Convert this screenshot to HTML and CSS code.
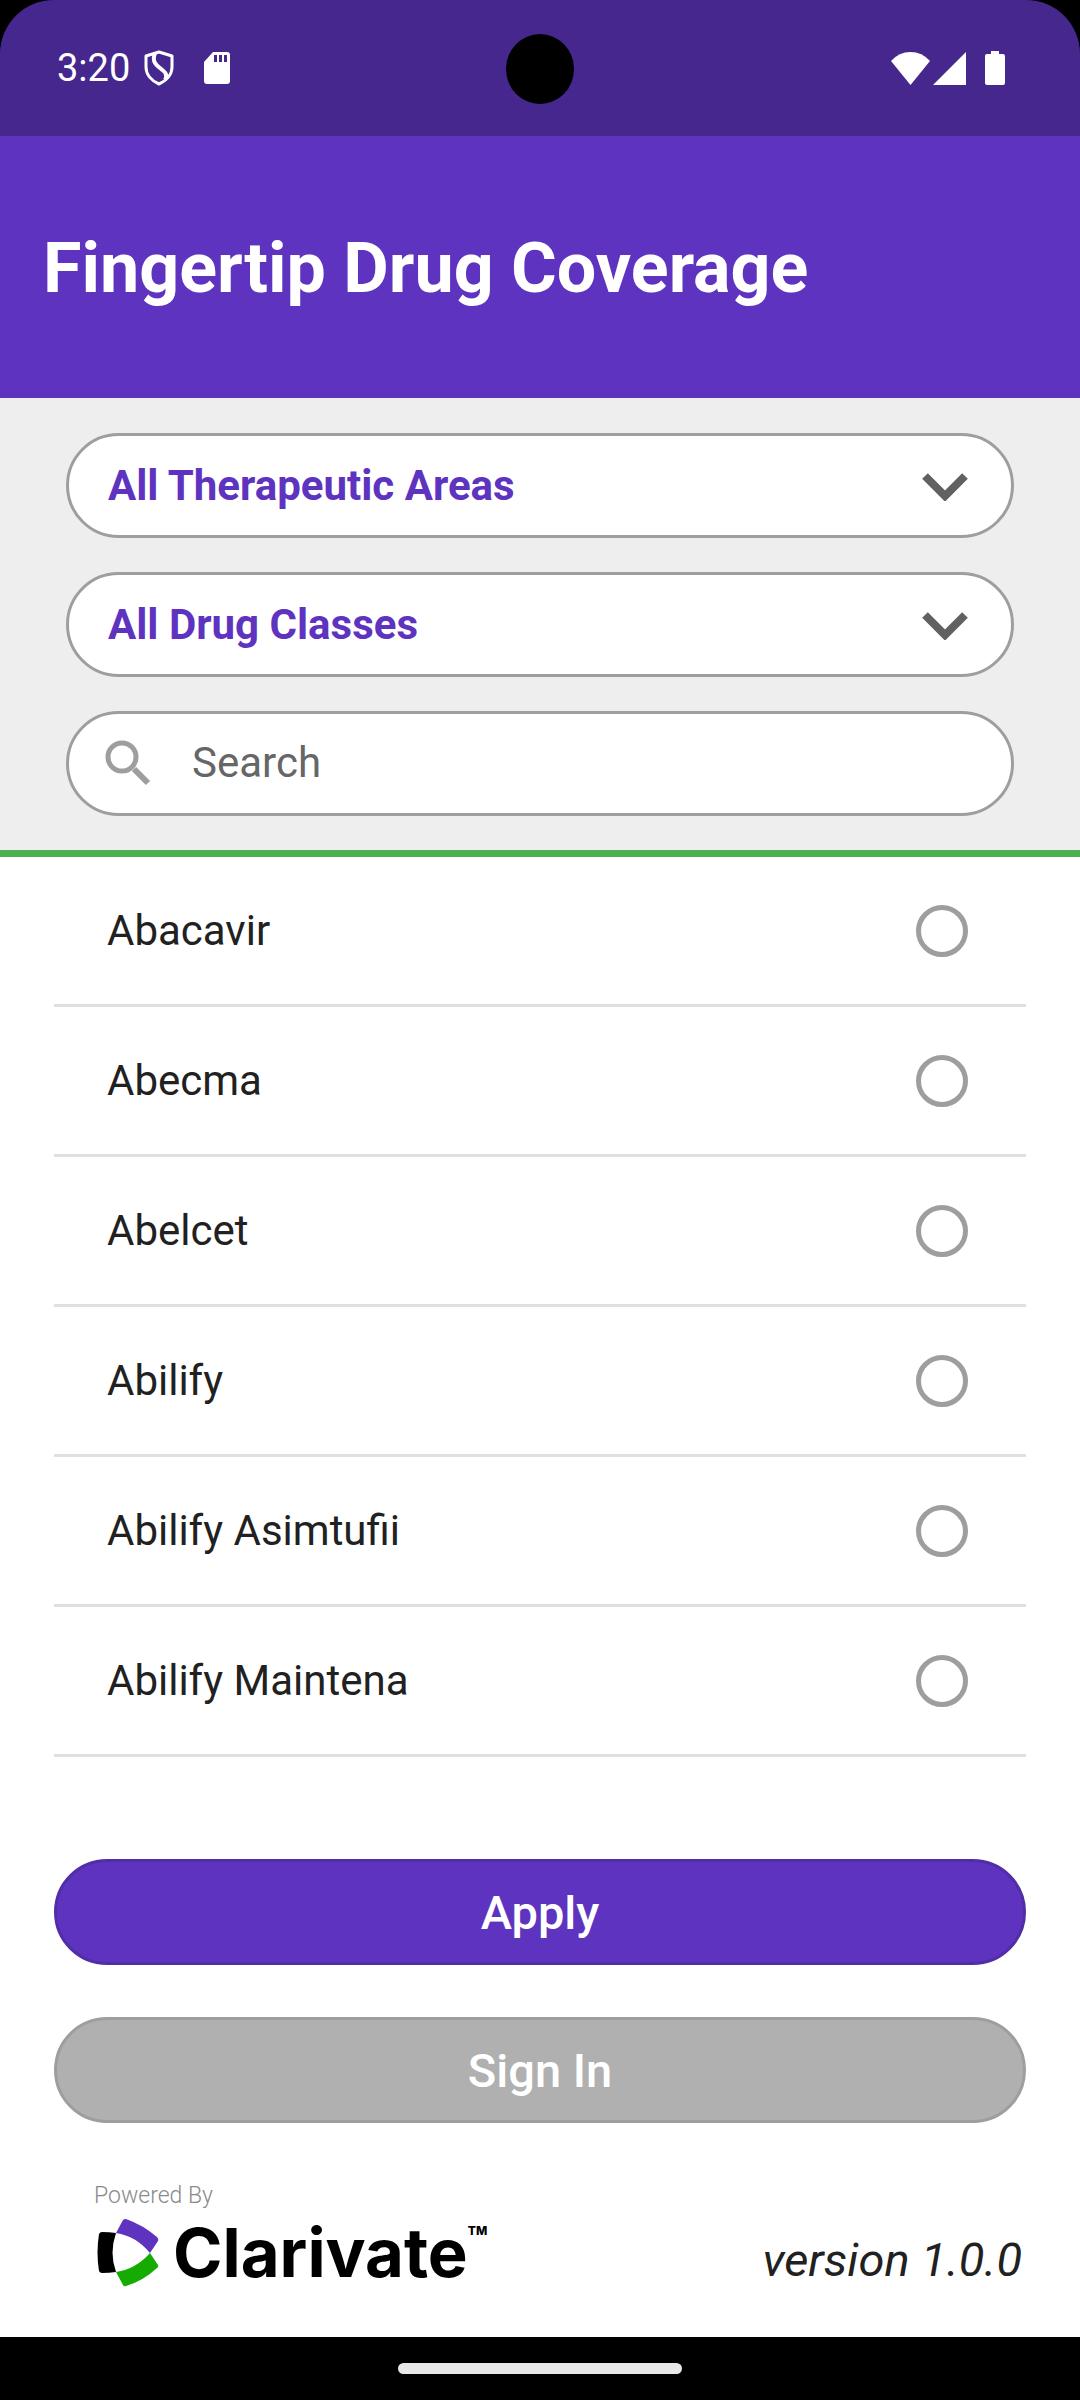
FILE: index.html
```html
<!DOCTYPE html>
<html lang="en">
<head>
    <meta charset="UTF-8" />
    <meta name="viewport" content="width=device-width, initial-scale=1.0" />
    <title>Fingertip Drug Coverage</title>
    <link rel="stylesheet" href="styles.css">
</head>
<body>
    <div class="status-bar">
        <div class="status-left">
            <span class="time">3:20</span>
            <svg class="icon-shield" width="30" height="36" viewBox="0 0 30 36" fill="none" stroke="#fff" stroke-width="3" stroke-linejoin="round">
                <path d="M15 2 L28 6 V17 C28 25 22 31 15 34 C8 31 2 25 2 17 V6 Z" />
                <path d="M11 3 C8 11 11 14 16 18 C21 22 24 24 21 30" stroke-width="4" />
            </svg>
            <svg class="icon-sd" width="26" height="32" viewBox="0 0 26 32">
                <path fill="#fff" fill-rule="evenodd" d="M9 0 H23 Q26 0 26 3 V29 Q26 32 23 32 H3 Q0 32 0 29 V10 Z M10 3 V10 H13 V3 Z M15 3 V10 H18 V3 Z M20 3 V10 H23 V3 Z" />
            </svg>
        </div>
        <div class="camera"></div>
        <div class="status-right">
            <svg width="39" height="33" viewBox="0 0 39 33"><path fill="#fff" d="M0 9 Q8 0 19.500 0 Q31 0 39 9 L19.500 33 Z" /></svg>
            <svg width="33" height="33" viewBox="0 0 33 33"><path fill="#fff" d="M33 0 V33 H0 Z" /></svg>
            <svg class="icon-battery" width="20" height="34" viewBox="0 0 20 34"><path fill="#fff" d="M6 0 H14 V3 H18 Q20 3 20 5 V32 Q20 34 18 34 H2 Q0 34 0 32 V5 Q0 3 2 3 H6 Z" /></svg>
        </div>
    </div>

    <header class="header">
        <h1>Fingertip Drug Coverage</h1>
    </header>

    <form class="drug-form">
        <div class="filters">
            <div class="field">
                <select id="area" aria-label="Therapeutic area">
                    <option>All Therapeutic Areas</option>
                </select>
                <svg class="chevron" width="46" height="28" viewBox="0 0 46 28" fill="none" stroke="#616161" stroke-width="8"><path d="M3 3 L23 23 L43 3" /></svg>
            </div>
            <div class="field">
                <select id="drugClass" aria-label="Drug class">
                    <option>All Drug Classes</option>
                </select>
                <svg class="chevron" width="46" height="28" viewBox="0 0 46 28" fill="none" stroke="#616161" stroke-width="8"><path d="M3 3 L23 23 L43 3" /></svg>
            </div>
            <div class="field search">
                <svg width="46" height="46" viewBox="0 0 46 46" fill="none" stroke="#9e9e9e">
                    <circle cx="17" cy="17" r="14" stroke-width="5" />
                    <path d="M29 29 L43 43" stroke-width="6" />
                </svg>
                <input type="text" placeholder="Search" id="search" aria-label="Search">
            </div>
        </div>

        <div class="drug-list">
            <label class="drug">Abacavir <input type="radio" name="drug"></label>
            <label class="drug">Abecma <input type="radio" name="drug"></label>
            <label class="drug">Abelcet <input type="radio" name="drug"></label>
            <label class="drug">Abilify <input type="radio" name="drug"></label>
            <label class="drug">Abilify Asimtufii <input type="radio" name="drug"></label>
            <label class="drug">Abilify Maintena <input type="radio" name="drug"></label>
        </div>

        <div class="actions">
            <button type="button" class="btn btn-apply">Apply</button>
            <button type="button" class="btn btn-signin">Sign In</button>
        </div>
    </form>

    <footer class="footer">
        <div class="powered">
            <p>Powered By</p>
            <div class="logo">
                <svg width="62" height="68" viewBox="0 0 62 68">
                    <path fill="#000" d="M5 13 Q12 13 19 14 Q12 34 19 53 Q12 54 5 54 Q3 54 2 52 Q-1 34 2 15 Q3 13 5 13 Z" />
                    <path fill="#5e33bf" d="M19 14 L26 1 Q27 0 29 0 Q46 6 60 18 Q62 20 61 22 L53 34 Q39 17 19 14 Z" />
                    <path fill="#16ab03" d="M19 53 L26 66 Q27 68 29 67 Q46 62 60 49 Q62 48 61 46 L53 34 Q39 50 19 53 Z" />
                </svg>
                <span class="logo-name">Clarivate</span>
                <span class="logo-tm">TM</span>
            </div>
        </div>
        <p class="version">version 1.0.0</p>
    </footer>

    <div class="nav-bar">
        <div class="nav-handle"></div>
    </div>
</body>
</html>
```
FILE: styles.css
```css
* {
    margin: 0;
    padding: 0;
    box-sizing: border-box;
    font-family: Roboto, sans-serif;
}

html {
    background: #000;
}

body {
    display: flex;
    flex-direction: column;
    min-height: 100vh;
    color: #212121;
}

svg {
    display: block;
    flex: none;
}

/* Status bar */
.status-bar {
    display: grid;
    grid-template-columns: 1fr auto 1fr;
    align-items: center;
    height: 136px;
    padding: 0 75px 0 57px;
    background: #46278e;
    border-radius: 54px 54px 0 0;
    position: relative;
}

.status-left,
.status-right {
    display: flex;
    align-items: center;
}

.time {
    font-size: 38px;
    color: #fff;
}

.icon-shield {
    margin-left: 14px;
}

.icon-sd {
    margin-left: 30px;
}

.camera {
    position: absolute;
    left: 50%;
    top: 34px;
    width: 68px;
    height: 70px;
    margin-left: -34px;
    border-radius: 50%;
    background: #000;
}

.status-right {
    grid-column: 3;
    justify-content: flex-end;
    gap: 3px;
}

.icon-battery {
    margin-left: 16px;
}

/* Header */
.header {
    display: flex;
    align-items: center;
    height: 262px;
    padding: 2px 43px 0;
    background: #5e33bf;
}

.header h1 {
    font-size: 70px;
    font-weight: 700;
    color: #fff;
}

/* Form */
.drug-form {
    flex: 1;
    background: #fff;
}

.filters {
    display: flex;
    flex-direction: column;
    gap: 34px;
    padding: 35px 66px 34px;
    background: #eee;
    border-bottom: 7px solid #4caf50;
}

.field {
    position: relative;
    height: 105px;
}

.field select,
.search {
    width: 100%;
    height: 105px;
    background: #fff;
    border: 3px solid #9e9e9e;
    border-radius: 53px;
}

.field select {
    appearance: none;
    padding: 0 39px;
    font-size: 42px;
    font-weight: 700;
    color: #5e33bf;
}

.chevron {
    position: absolute;
    right: 46px;
    top: 40px;
    pointer-events: none;
}

.search {
    display: flex;
    align-items: center;
    gap: 41px;
    padding: 0 36px 2px;
}

.search input {
    flex: 1;
    min-width: 0;
    border: none;
    outline: none;
    background: none;
    font-size: 42px;
    color: #212121;
}

.search input::placeholder {
    color: #666;
}

/* Drug list */
.drug-list {
    padding: 0 54px;
}

.drug {
    display: flex;
    justify-content: space-between;
    align-items: center;
    height: 150px;
    padding: 0 58px 0 53px;
    border-bottom: 3px solid #e0e0e0;
    font-size: 42px;
}

.drug input {
    appearance: none;
    width: 52px;
    height: 52px;
    border: 5px solid #9e9e9e;
    border-radius: 50%;
}

.drug input:checked {
    border-color: #5e33bf;
    background: radial-gradient(#5e33bf 50%, #fff 55%);
}

/* Buttons */
.actions {
    display: flex;
    flex-direction: column;
    gap: 52px;
    padding: 102px 54px 0;
}

.btn {
    width: 100%;
    height: 106px;
    border-radius: 53px;
    color: #fff;
    font-size: 47px;
    font-weight: 500;
}

.btn-apply {
    background: #5e33bf;
    border: 3px solid #512da8;
}

.btn-signin {
    background: #b0b0b0;
    border: 3px solid #9e9e9e;
}

/* Footer */
.footer {
    display: flex;
    justify-content: space-between;
    align-items: flex-end;
    padding: 0 58px 50px 94px;
    background: #fff;
}

.powered p {
    font-size: 23px;
    font-weight: 300;
    line-height: 28px;
    margin-bottom: 9px;
    color: #8a8a8a;
}

.logo {
    display: flex;
    align-items: center;
    padding-left: 3px;
    color: #000;
}

.logo-name {
    margin-left: 14px;
    font-family: Inter, sans-serif;
    font-size: 67px;
    font-weight: 700;
    line-height: 68px;
}

.logo-tm {
    align-self: flex-start;
    font-family: Inter, sans-serif;
    font-size: 12px;
    font-weight: 800;
    line-height: 24px;
}

.version {
    font-size: 47px;
    font-style: italic;
    line-height: 54px;
}

/* Gesture bar */
.nav-bar {
    display: flex;
    justify-content: center;
    align-items: center;
    height: 63px;
    background: #000;
}

.nav-handle {
    width: 284px;
    height: 11px;
    border-radius: 6px;
    background: #e8e8e8;
}
```
